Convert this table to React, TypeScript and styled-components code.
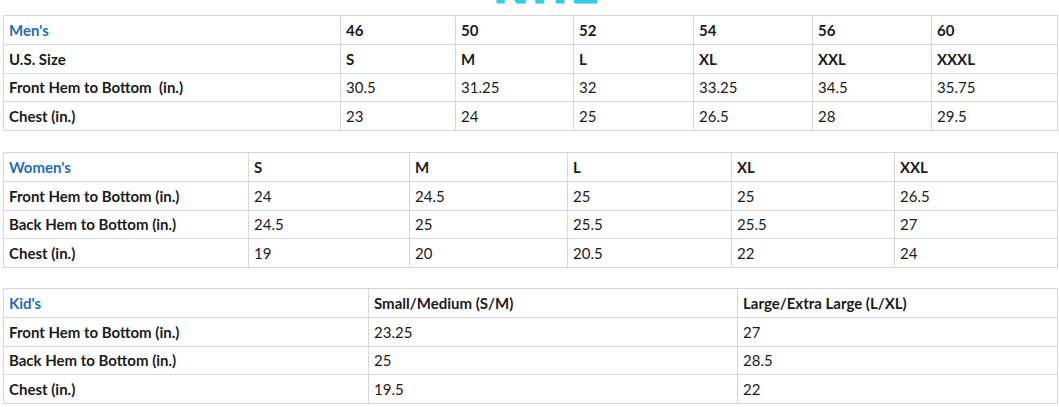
import styled, { createGlobalStyle } from "styled-components";

const GlobalStyle = createGlobalStyle`
  body {
    margin: 0;
    background: #ffffff;
    font-family: Lato, "Open Sans", Arial, sans-serif;
    color: #1b1b1b;
  }
`;

const Page = styled.div`
  width: 1059px;
  height: 407px;
  overflow: hidden;
  padding: 0 2px 0 3px;
  box-sizing: border-box;
  display: flex;
  flex-direction: column;
`;

const Brand = styled.div`
  height: 15px;
  display: flex;
  justify-content: center;
  align-items: flex-end;
  padding-left: 34px;
  overflow: hidden;
`;

const BrandText = styled.span`
  font-family: "DejaVu Sans", Arial, sans-serif;
  font-size: 44px;
  font-weight: 700;
  line-height: 1;
  letter-spacing: 2px;
  color: #1fd6ea;
  text-shadow: 1px 1px 1px rgba(0, 0, 0, 0.25);
  margin-bottom: 5px;
`;

const Table = styled.table<{ $gap: number }>`
  width: 1054px;
  border-collapse: collapse;
  table-layout: fixed;
  margin-top: ${({ $gap }) => $gap}px;
  border: 1px solid #d3d3d3;
`;

const Cell = styled.td<{ $bold?: boolean; $head?: boolean; $h: number }>`
  height: ${({ $h }) => $h}px;
  padding: 0 5px;
  border: 1px solid #d6d6d6;
  font-size: 15px;
  font-weight: ${({ $bold }) => ($bold ? 700 : 400)};
  color: ${({ $head }) => ($head ? "#1f6cbc" : "#1b1b1b")};
  vertical-align: middle;
  white-space: nowrap;
  box-sizing: border-box;
`;

type SizeTable = {
  cols: number[];
  gap: number;
  rowH: number;
  head: string[];
  rows: { label: string; values: string[]; bold?: boolean }[];
};

const tables: SizeTable[] = [
  {
    cols: [337, 115, 118, 120, 119, 119, 126],
    gap: 0,
    rowH: 28.75,
    head: ["Men's", "46", "50", "52", "54", "56", "60"],
    rows: [
      { label: "U.S. Size", values: ["S", "M", "L", "XL", "XXL", "XXXL"], bold: true },
      { label: "Front Hem to Bottom\u00a0 (in.)", values: ["30.5", "31.25", "32", "33.25", "34.5", "35.75"] },
      { label: "Chest (in.)", values: ["23", "24", "25", "26.5", "28", "29.5"] },
    ],
  },
  {
    cols: [245, 161, 158, 164, 163, 163],
    gap: 21,
    rowH: 28.75,
    head: ["Women's", "S", "M", "L", "XL", "XXL"],
    rows: [
      { label: "Front Hem to Bottom (in.)", values: ["24", "24.5", "25", "25", "26.5"] },
      { label: "Back Hem to Bottom (in.)", values: ["24.5", "25", "25.5", "25.5", "27"] },
      { label: "Chest (in.)", values: ["19", "20", "20.5", "22", "24"] },
    ],
  },
  {
    cols: [365, 369, 320],
    gap: 20,
    rowH: 28.75,
    head: ["Kid's", "Small/Medium (S/M)", "Large/Extra Large (L/XL)"],
    rows: [
      { label: "Front Hem to Bottom (in.)", values: ["23.25", "27"] },
      { label: "Back Hem to Bottom (in.)", values: ["25", "28.5"] },
      { label: "Chest (in.)", values: ["19.5", "22"] },
    ],
  },
];

function App() {
  return (
    <>
      <GlobalStyle />
      <Page>
        <Brand>
          <BrandText>NHE</BrandText>
        </Brand>
        {tables.map((t, i) => (
          <Table key={i} $gap={t.gap}>
            <colgroup>
              {t.cols.map((w, j) => (
                <col key={j} style={{ width: w }} />
              ))}
            </colgroup>
            <tbody>
              <tr>
                {t.head.map((h, j) => (
                  <Cell key={j} $h={t.rowH} $bold $head={j === 0}>
                    {h}
                  </Cell>
                ))}
              </tr>
              {t.rows.map((r) => (
                <tr key={r.label}>
                  <Cell $h={t.rowH} $bold>
                    {r.label}
                  </Cell>
                  {r.values.map((v, j) => (
                    <Cell key={j} $h={t.rowH} $bold={r.bold}>
                      {v}
                    </Cell>
                  ))}
                </tr>
              ))}
            </tbody>
          </Table>
        ))}
      </Page>
    </>
  );
}

export default App;
